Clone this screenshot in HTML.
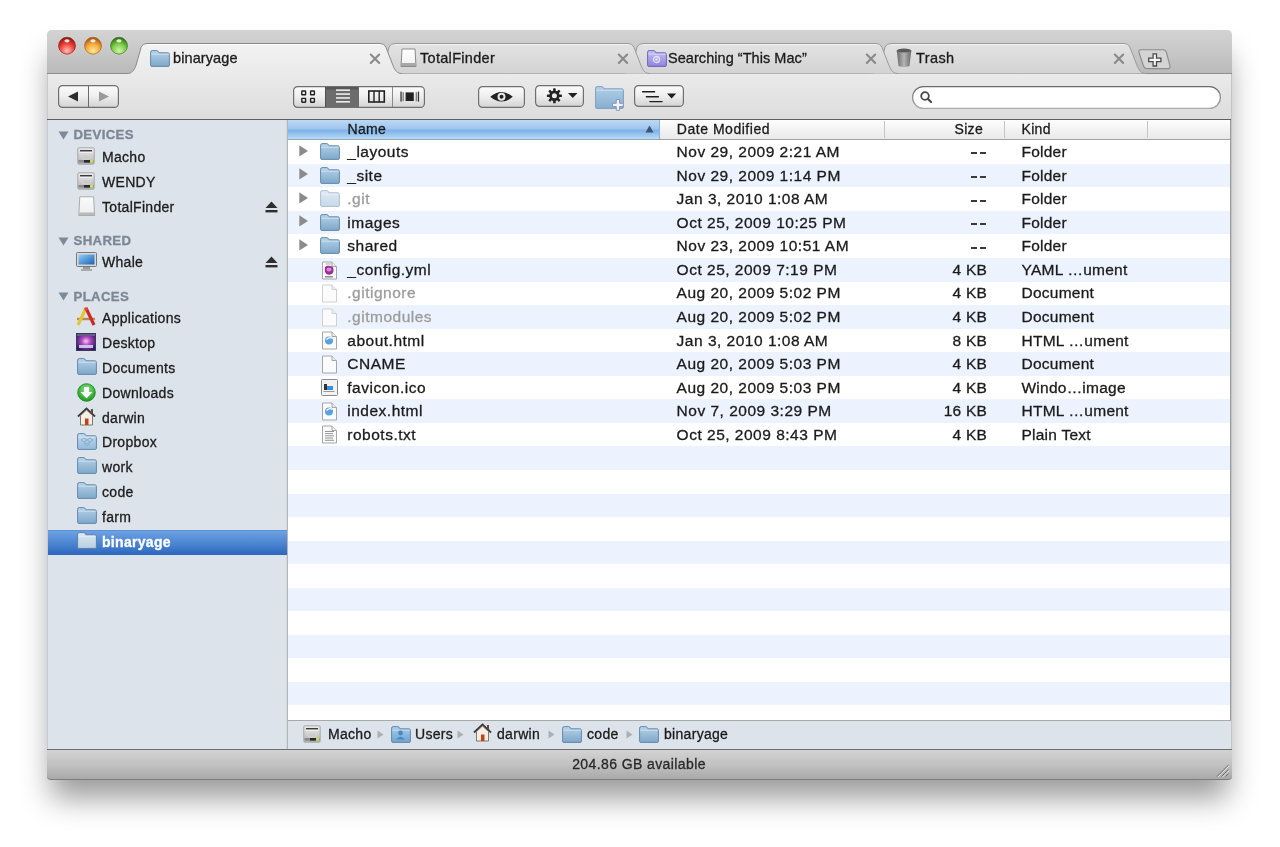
<!DOCTYPE html><html><head><meta charset='utf-8'><style>
*{box-sizing:border-box;margin:0;padding:0}
html,body{width:1280px;height:847px;overflow:hidden;background:#fff;font-family:"Liberation Sans", sans-serif;}
.a{position:absolute}
.t{position:absolute;white-space:nowrap;line-height:1;color:#1b1b1b;-webkit-text-stroke:0.3px currentColor}
svg{position:absolute;overflow:visible}
</style></head><body><div id='root' style='position:absolute;left:0;top:0;width:1280px;height:847px;will-change:transform'><div class='a' style='left:47px;top:30px;width:1185px;height:750px;border-radius:5px 5px 4px 4px;box-shadow:0 22px 30px -4px rgba(0,0,0,.4);background:#dcdcdc'></div><div class='a' style='left:47px;top:30px;width:1185px;height:44px;border-radius:5px 5px 0 0;background:linear-gradient(#d3d3d3,#c9c9c9 45%,#b9b9b9)'></div><div class='a' style='left:47px;top:74px;width:1185px;height:45px;background:linear-gradient(#eaeaea,#e2e2e2 60%,#dddddd)'></div><div class='a' style='left:47px;top:119px;width:1185px;height:1px;background:#5e5e5e'></div><svg style='left:0;top:0' width='1280' height='100' viewBox='0 0 1280 100'><defs><linearGradient id='gi' x1='0' y1='0' x2='0' y2='1'><stop offset='0' stop-color='#e3e3e3'/><stop offset='1' stop-color='#d3d3d3'/></linearGradient><linearGradient id='ga' x1='0' y1='0' x2='0' y2='1'><stop offset='0' stop-color='#f2f2f2'/><stop offset='1' stop-color='#eaeaea'/></linearGradient></defs><line x1='47' y1='73.5' x2='1232' y2='73.5' stroke='#8e8e8e' stroke-width='1'/><path d='M871,73.5 C876,73.5 878,70.5 880,65.5 L885,47.5 C886.5,44.5 888,43.5 892,43.5 L1123,43.5 C1127,43.5 1128.5,44.5 1130,47.5 L1137,65.5 C1139,70.5 1141,73.5 1146,73.5' fill='url(#gi)' stroke='#9b9b9b' stroke-width='1'/><line x1='891' y1='44.6' x2='1124' y2='44.6' stroke='#f2f2f2' stroke-width='1'/><path d='M623,73.5 C628,73.5 630,70.5 632,65.5 L637,47.5 C638.5,44.5 640,43.5 644,43.5 L875,43.5 C879,43.5 880.5,44.5 882,47.5 L889,65.5 C891,70.5 893,73.5 898,73.5' fill='url(#gi)' stroke='#9b9b9b' stroke-width='1'/><line x1='643' y1='44.6' x2='876' y2='44.6' stroke='#f2f2f2' stroke-width='1'/><path d='M375,73.5 C380,73.5 382,70.5 384,65.5 L389,47.5 C390.5,44.5 392,43.5 396,43.5 L627,43.5 C631,43.5 632.5,44.5 634,47.5 L641,65.5 C643,70.5 645,73.5 650,73.5' fill='url(#gi)' stroke='#9b9b9b' stroke-width='1'/><line x1='395' y1='44.6' x2='628' y2='44.6' stroke='#f2f2f2' stroke-width='1'/><path d='M1140.5,49.8 L1163,49.8 Q1165.5,49.8 1166.5,52.5 L1170,66 Q1170.5,68.6 1168,68.6 L1147,68.6 Q1144.5,68.6 1143.5,66 L1139,52.5 Q1138.5,49.8 1140.5,49.8 Z' fill='#d4d4d4' stroke='#8c8c8c' stroke-width='1.1'/><path d='M1153.1,53.8 h3.4 v4.4 h4.4 v3.4 h-4.4 v4.4 h-3.4 v-4.4 h-4.4 v-3.4 h4.4 Z' fill='#f6f6f6' stroke='#4a4a4a' stroke-width='1.3'/><path d='M127,73.5 C132,73.5 134,70.5 136,65.5 L141,47.5 C142.5,44.5 144,43.5 148,43.5 L379,43.5 C383,43.5 384.5,44.5 386,47.5 L393,65.5 C395,70.5 397,73.5 402,73.5 L402,74.5 L127,74.5 Z' fill='url(#ga)' stroke='none'/><path d='M127,73.5 C132,73.5 134,70.5 136,65.5 L141,47.5 C142.5,44.5 144,43.5 148,43.5 L379,43.5 C383,43.5 384.5,44.5 386,47.5 L393,65.5 C395,70.5 397,73.5 402,73.5' fill='none' stroke='#8a8a8a' stroke-width='1'/><line x1='147' y1='44.6' x2='380' y2='44.6' stroke='#fff' stroke-width='1'/><path d='M370.8,54.599999999999994 L379.2,63.0 M379.2,54.599999999999994 L370.8,63.0' stroke='#8a8a8a' stroke-width='2.1' stroke-linecap='round'/><path d='M618.8,54.599999999999994 L627.2,63.0 M627.2,54.599999999999994 L618.8,63.0' stroke='#8a8a8a' stroke-width='2.1' stroke-linecap='round'/><path d='M866.8,54.599999999999994 L875.2,63.0 M875.2,54.599999999999994 L866.8,63.0' stroke='#8a8a8a' stroke-width='2.1' stroke-linecap='round'/><path d='M1114.8,54.599999999999994 L1123.2,63.0 M1123.2,54.599999999999994 L1114.8,63.0' stroke='#8a8a8a' stroke-width='2.1' stroke-linecap='round'/></svg><svg style='left:0;top:0' width='200' height='80' viewBox='0 0 200 80'><defs><radialGradient id='l67' cx='0.5' cy='0.8' r='0.75'><stop offset='0' stop-color='#ffc0bc'/><stop offset='0.55' stop-color='#f2413a'/><stop offset='1' stop-color='#8e1c12'/></radialGradient></defs><circle cx='67' cy='45.7' r='9.6' fill='rgba(255,255,255,.18)'/><circle cx='67' cy='45.7' r='8.5' fill='url(#l67)' stroke='#8e1c12' stroke-opacity='.75' stroke-width='0.9'/><ellipse cx='67' cy='40.800000000000004' rx='2.6' ry='1.6' fill='rgba(255,255,255,.85)'/><defs><radialGradient id='l93' cx='0.5' cy='0.8' r='0.75'><stop offset='0' stop-color='#ffec98'/><stop offset='0.55' stop-color='#f5a93a'/><stop offset='1' stop-color='#a45a12'/></radialGradient></defs><circle cx='93' cy='45.7' r='9.6' fill='rgba(255,255,255,.18)'/><circle cx='93' cy='45.7' r='8.5' fill='url(#l93)' stroke='#a45a12' stroke-opacity='.75' stroke-width='0.9'/><ellipse cx='93' cy='40.800000000000004' rx='2.6' ry='1.6' fill='rgba(255,255,255,.85)'/><defs><radialGradient id='l119' cx='0.5' cy='0.8' r='0.75'><stop offset='0' stop-color='#d2f4a8'/><stop offset='0.55' stop-color='#7ccb48'/><stop offset='1' stop-color='#2f7418'/></radialGradient></defs><circle cx='119' cy='45.7' r='9.6' fill='rgba(255,255,255,.18)'/><circle cx='119' cy='45.7' r='8.5' fill='url(#l119)' stroke='#2f7418' stroke-opacity='.75' stroke-width='0.9'/><ellipse cx='119' cy='40.800000000000004' rx='2.6' ry='1.6' fill='rgba(255,255,255,.85)'/></svg><svg style='left:150px;top:49.5px' width='20' height='17' viewBox='0 0 20 17'><defs><linearGradient id='f1500_495' x1='0' y1='0' x2='0' y2='1'><stop offset='0' stop-color='#b6d3e9'/><stop offset='1' stop-color='#7ea7c9'/></linearGradient></defs><path d='M0.6,15.4 L0.6,2.2 Q0.6,0.6 2.2,0.6 L6.8,0.6 Q8,0.6 8.6,2.2 L8.9,2.8 L17.8,2.8 Q19.4,2.8 19.4,4.4 L19.4,15.4 Q19.4,16.4 18,16.4 L2,16.4 Q0.6,16.4 0.6,15.4 Z' fill='url(#f1500_495)' stroke='#6489ac' stroke-width='1'/><path d='M1.2,4.2 L18.8,4.2' stroke='rgba(255,255,255,.45)' stroke-width='1'/></svg><div class='t' style='left:173px;top:50.93px;font-size:14.5px;color:#1b1b1b;font-weight:400;letter-spacing:0.1px;'>binaryage</div><svg style='left:399.5px;top:48px' width='17' height='20' viewBox='0 0 17 20'><defs><linearGradient id='td' x1='0' y1='0' x2='0' y2='1'><stop offset='0' stop-color='#fff'/><stop offset='.8' stop-color='#f3f3f3'/><stop offset='1' stop-color='#b0b0b0'/></linearGradient></defs><path d='M2,1 L15,1 L16,18.5 L1,18.5 Z' fill='url(#td)' stroke='#8a8a8a' stroke-width='1'/><rect x='1.5' y='15' width='14' height='3' fill='#a8a8a8'/></svg><div class='t' style='left:420px;top:50.93px;font-size:14.5px;color:#1b1b1b;font-weight:400;letter-spacing:0.3px;'>TotalFinder</div><svg style='left:646.5px;top:49.5px' width='20' height='17' viewBox='0 0 20 17'><defs><linearGradient id='f6465_495' x1='0' y1='0' x2='0' y2='1'><stop offset='0' stop-color='#c8c0f4'/><stop offset='1' stop-color='#8f83dc'/></linearGradient></defs><path d='M0.6,15.4 L0.6,2.2 Q0.6,0.6 2.2,0.6 L6.8,0.6 Q8,0.6 8.6,2.2 L8.9,2.8 L17.8,2.8 Q19.4,2.8 19.4,4.4 L19.4,15.4 Q19.4,16.4 18,16.4 L2,16.4 Q0.6,16.4 0.6,15.4 Z' fill='url(#f6465_495)' stroke='#6e64bb' stroke-width='1'/><path d='M1.2,4.2 L18.8,4.2' stroke='rgba(255,255,255,.45)' stroke-width='1'/></svg><svg style='left:651px;top:54px' width='11' height='11' viewBox='0 0 11 11'><circle cx='5.5' cy='5.5' r='3' fill='none' stroke='#e6e2ff' stroke-width='1.3'/><circle cx='5.5' cy='5.5' r='1.2' fill='#e6e2ff'/></svg><div class='t' style='left:668px;top:50.93px;font-size:14.5px;color:#1b1b1b;font-weight:400;letter-spacing:0.05px;'>Searching “This Mac”</div><svg style='left:896px;top:48px' width='16' height='20' viewBox='0 0 16 20'><defs><linearGradient id='tr' x1='0' y1='0' x2='1' y2='0'><stop offset='0' stop-color='#6a6a6a'/><stop offset='.5' stop-color='#b5b5b5'/><stop offset='1' stop-color='#6a6a6a'/></linearGradient></defs><ellipse cx='8' cy='3' rx='7.5' ry='2.5' fill='#5a5a5a'/><path d='M0.8,3 L2.5,18 Q8,20 13.5,18 L15.2,3 Q8,6 0.8,3 Z' fill='url(#tr)'/></svg><div class='t' style='left:916px;top:50.93px;font-size:14.5px;color:#1b1b1b;font-weight:400;letter-spacing:0.4px;'>Trash</div><svg style='left:58px;top:85px' width='61' height='24' viewBox='0 0 61 24'><defs><linearGradient id='bt58' x1='0' y1='0' x2='0' y2='1'><stop offset='0' stop-color='#fbfbfb'/><stop offset='.45' stop-color='#f0f0f0'/><stop offset='1' stop-color='#d3d3d3'/></linearGradient></defs><rect x='0.6' y='0.6' width='59.8' height='21.8' rx='4' fill='url(#bt58)' stroke='#707070' stroke-width='1.2'/><line x1='30.5' y1='1' x2='30.5' y2='22' stroke='#6a6a6a'/><path d='M10,11.5 L20,6.5 L20,16.5 Z' fill='#2c2c2c'/><path d='M51,11.5 L41,6.5 L41,16.5 Z' fill='#9a9a9a'/></svg><svg style='left:293px;top:85.6px' width='132' height='23' viewBox='0 0 132 23'><defs><linearGradient id='bt293' x1='0' y1='0' x2='0' y2='1'><stop offset='0' stop-color='#fbfbfb'/><stop offset='.45' stop-color='#f0f0f0'/><stop offset='1' stop-color='#d3d3d3'/></linearGradient></defs><rect x='0.6' y='0.6' width='130.8' height='20.8' rx='4' fill='url(#bt293)' stroke='#707070' stroke-width='1.2'/><rect x='32' y='1' width='33.5' height='20' fill='#6c6c6c'/><rect x='32' y='1' width='33.5' height='2.5' fill='#575757'/><line x1='32.5' y1='1' x2='32.5' y2='21' stroke='#505050'/><line x1='65.5' y1='1' x2='65.5' y2='21' stroke='#6a6a6a'/><line x1='99.5' y1='1' x2='99.5' y2='21' stroke='#8a8a8a'/><rect x='8.8' y='5' width='3.8' height='3.8' rx='0.4' fill='none' stroke='#222' stroke-width='1.4'/><rect x='8.8' y='12.4' width='3.8' height='3.8' rx='0.4' fill='none' stroke='#222' stroke-width='1.4'/><rect x='17.6' y='5' width='3.8' height='3.8' rx='0.4' fill='none' stroke='#222' stroke-width='1.4'/><rect x='17.6' y='12.4' width='3.8' height='3.8' rx='0.4' fill='none' stroke='#222' stroke-width='1.4'/><rect x='43' y='3.4' width='14' height='1.5' fill='#f4f4f4'/><rect x='43' y='7.3' width='14' height='1.5' fill='#f4f4f4'/><rect x='43' y='11.2' width='14' height='1.5' fill='#f4f4f4'/><rect x='43' y='15.1' width='14' height='1.5' fill='#f4f4f4'/><rect x='75.8' y='5' width='15.5' height='11' fill='none' stroke='#222' stroke-width='1.6'/><line x1='81' y1='5' x2='81' y2='16' stroke='#222' stroke-width='1.4'/><line x1='86.2' y1='5' x2='86.2' y2='16' stroke='#222' stroke-width='1.4'/><rect x='112.6' y='6.4' width='8.2' height='8.6' fill='#222'/><rect x='107.4' y='5.6' width='1.3' height='10' fill='#333'/><rect x='109.6' y='6.2' width='1.1' height='9' fill='#666'/><rect x='124.8' y='5.6' width='1.3' height='10' fill='#333'/><rect x='122.7' y='6.2' width='1.1' height='9' fill='#666'/></svg><svg style='left:478px;top:85.5px' width='47' height='23' viewBox='0 0 47 23'><defs><linearGradient id='bt478' x1='0' y1='0' x2='0' y2='1'><stop offset='0' stop-color='#fbfbfb'/><stop offset='.45' stop-color='#f0f0f0'/><stop offset='1' stop-color='#d3d3d3'/></linearGradient></defs><rect x='0.6' y='0.6' width='45.8' height='20.8' rx='4' fill='url(#bt478)' stroke='#707070' stroke-width='1.2'/><path d='M12.2,10.8 Q23.5,1.2 34.8,10.8 Q23.5,20.4 12.2,10.8 Z' fill='#222'/><circle cx='23.5' cy='10.8' r='4' fill='#e8e8e8'/><circle cx='23.5' cy='10.8' r='2' fill='#222'/></svg><svg style='left:535px;top:85.4px' width='49' height='23' viewBox='0 0 49 23'><defs><linearGradient id='bt535' x1='0' y1='0' x2='0' y2='1'><stop offset='0' stop-color='#fbfbfb'/><stop offset='.45' stop-color='#f0f0f0'/><stop offset='1' stop-color='#d3d3d3'/></linearGradient></defs><rect x='0.6' y='0.6' width='47.8' height='20.8' rx='4' fill='url(#bt535)' stroke='#707070' stroke-width='1.2'/><g transform='translate(19.4,10.8)'><rect x='-1.3' y='-7.5' width='2.6' height='15' rx='0.6' fill='#222' transform='rotate(0)'/><rect x='-1.3' y='-7.5' width='2.6' height='15' rx='0.6' fill='#222' transform='rotate(45)'/><rect x='-1.3' y='-7.5' width='2.6' height='15' rx='0.6' fill='#222' transform='rotate(90)'/><rect x='-1.3' y='-7.5' width='2.6' height='15' rx='0.6' fill='#222' transform='rotate(135)'/><circle r='5.2' fill='#222'/><circle r='2.5' fill='#eaeaea'/></g><path d='M33,8 L42.5,8 L37.75,13 Z' fill='#222'/></svg><svg style='left:594.5px;top:86px' width='29' height='23' viewBox='0 0 29 23'><defs><linearGradient id='f5945_860' x1='0' y1='0' x2='0' y2='1'><stop offset='0' stop-color='#b2cfe6'/><stop offset='1' stop-color='#86afd0'/></linearGradient></defs><path d='M0.6,21.4 L0.6,2.2 Q0.6,0.6 2.2,0.6 L6.8,0.6 Q8,0.6 8.6,2.2 L8.9,2.8 L26.8,2.8 Q28.4,2.8 28.4,4.4 L28.4,21.4 Q28.4,22.4 27,22.4 L2,22.4 Q0.6,22.4 0.6,21.4 Z' fill='url(#f5945_860)' stroke='#7c9fbe' stroke-width='1'/><path d='M1.2,4.2 L27.8,4.2' stroke='rgba(255,255,255,.45)' stroke-width='1'/></svg><svg style='left:612px;top:98.5px' width='12' height='12' viewBox='0 0 12 12'><path d='M4.3,0.5 h3.2 v3.8 h3.8 v3.2 h-3.8 v3.8 h-3.2 v-3.8 h-3.8 v-3.2 h3.8 Z' fill='#f4f4ff' stroke='#7f8fc0' stroke-width='0.9'/></svg><svg style='left:634px;top:85.4px' width='50' height='23' viewBox='0 0 50 23'><defs><linearGradient id='bt634' x1='0' y1='0' x2='0' y2='1'><stop offset='0' stop-color='#fbfbfb'/><stop offset='.45' stop-color='#f0f0f0'/><stop offset='1' stop-color='#d3d3d3'/></linearGradient></defs><rect x='0.6' y='0.6' width='48.8' height='20.8' rx='4' fill='url(#bt634)' stroke='#707070' stroke-width='1.2'/><path d='M8.6,6.8 H20.6 M12.4,11.7 H24.4 M15.9,16.6 H28.1' stroke='#1e1e1e' stroke-width='1.4' stroke-linecap='round'/><path d='M33,8.6 L42.2,8.6 L37.6,13.4 Z' fill='#1e1e1e'/></svg><svg style='left:912px;top:86px' width='309' height='23' viewBox='0 0 309 23'><defs><linearGradient id='sf' x1='0' y1='0' x2='0' y2='1'><stop offset='0' stop-color='#6a6a6a'/><stop offset='1' stop-color='#ababab'/></linearGradient></defs><rect x='0.6' y='0.6' width='307.8' height='21.8' rx='10.9' fill='#fff' stroke='url(#sf)' stroke-width='1.2'/><circle cx='13' cy='10' r='3.8' fill='none' stroke='#4a4a4a' stroke-width='1.8'/><line x1='15.8' y1='12.8' x2='19' y2='16' stroke='#4a4a4a' stroke-width='2.2' stroke-linecap='round'/></svg><div class='a' style='left:47px;top:120px;width:241px;height:629px;background:#dde3ea'></div><div class='a' style='left:286px;top:120px;width:1px;height:629px;background:#d3d9e0'></div><div class='a' style='left:287px;top:120px;width:1px;height:629px;background:#b4b6b9'></div><svg style='left:58px;top:130.5px' width='11' height='9' viewBox='0 0 11 9'><path d='M0.5,0.5 L10.5,0.5 L5.5,8.5 Z' fill='#7e8a98'/></svg><div class='t' style='left:73.5px;top:128.33px;font-size:13.2px;color:#7c8795;font-weight:700;letter-spacing:0.35px;'>DEVICES</div><svg style='left:77px;top:147.4px' width='18' height='18' viewBox='0 0 18 18'><defs><linearGradient id='hd7847' x1='0' y1='0' x2='0' y2='1'><stop offset='0' stop-color='#ececec'/><stop offset='.6' stop-color='#c9c9c9'/><stop offset='1' stop-color='#b4b4b4'/></linearGradient></defs><rect x='0.8' y='0.8' width='16.4' height='16.4' rx='1.2' fill='url(#hd7847)' stroke='#a2a2a2' stroke-width='0.9'/><rect x='3' y='3' width='12' height='1.4' fill='#3c3c3c'/><rect x='2.5' y='5' width='13' height='0.8' fill='#f6f6f6'/><ellipse cx='9.0' cy='9.5' rx='4.5' ry='2.6' fill='none' stroke='#dadada' stroke-width='0.8'/><rect x='1.5' y='13' width='15' height='2.6' fill='#8a8a8a'/><rect x='7' y='13' width='6' height='2.6' fill='#2a2a2a'/><rect x='13' y='12.8' width='3' height='2.8' fill='#c8e04a'/></svg><div class='t' style='left:102px;top:150.05px;font-size:14px;color:#1c1c1c;font-weight:400;letter-spacing:0.3px;'>Macho</div><svg style='left:77px;top:172.2px' width='18' height='18' viewBox='0 0 18 18'><defs><linearGradient id='hd7872' x1='0' y1='0' x2='0' y2='1'><stop offset='0' stop-color='#ececec'/><stop offset='.6' stop-color='#c9c9c9'/><stop offset='1' stop-color='#b4b4b4'/></linearGradient></defs><rect x='0.8' y='0.8' width='16.4' height='16.4' rx='1.2' fill='url(#hd7872)' stroke='#a2a2a2' stroke-width='0.9'/><rect x='3' y='3' width='12' height='1.4' fill='#3c3c3c'/><rect x='2.5' y='5' width='13' height='0.8' fill='#f6f6f6'/><ellipse cx='9.0' cy='9.5' rx='4.5' ry='2.6' fill='none' stroke='#dadada' stroke-width='0.8'/><rect x='1.5' y='13' width='15' height='2.6' fill='#8a8a8a'/><rect x='7' y='13' width='6' height='2.6' fill='#2a2a2a'/><rect x='13' y='12.8' width='3' height='2.8' fill='#c8e04a'/></svg><div class='t' style='left:102px;top:174.85px;font-size:14px;color:#1c1c1c;font-weight:400;letter-spacing:0.3px;'>WENDY</div><svg style='left:78px;top:196.0px' width='18' height='21' viewBox='0 0 18 21'><defs><linearGradient id='wd' x1='0' y1='0' x2='0' y2='1'><stop offset='0' stop-color='#fafafa'/><stop offset='.8' stop-color='#f0f0f0'/><stop offset='1' stop-color='#d8d8d8'/></linearGradient></defs><path d='M1.8,0.8 L15.6,0.8 L16.6,19.5 L0.8,19.5 Z' fill='url(#wd)' stroke='#a5a5a5' stroke-width='0.9'/><rect x='1.2' y='16.5' width='15' height='2.6' fill='#b9b9b9'/></svg><div class='t' style='left:102px;top:199.65px;font-size:14px;color:#1c1c1c;font-weight:400;letter-spacing:0.3px;'>TotalFinder</div><svg style='left:265px;top:200.5px' width='14' height='12' viewBox='0 0 14 12'><path d='M0.5,7 L6.5,0.5 L12.5,7 Z' fill='#2e2e2e'/><rect x='0.5' y='9' width='12' height='2.4' fill='#2e2e2e'/></svg><svg style='left:58px;top:236.6px' width='11' height='9' viewBox='0 0 11 9'><path d='M0.5,0.5 L10.5,0.5 L5.5,8.5 Z' fill='#7e8a98'/></svg><div class='t' style='left:73.5px;top:234.43px;font-size:13.2px;color:#7c8795;font-weight:700;letter-spacing:0.35px;'>SHARED</div><svg style='left:76px;top:252.2px' width='21' height='20' viewBox='0 0 21 20'><defs><linearGradient id='mon' x1='0' y1='0' x2='1' y2='1'><stop offset='0' stop-color='#8fd0f8'/><stop offset='1' stop-color='#1d5fb7'/></linearGradient></defs><rect x='0.5' y='0.5' width='20' height='14' rx='1' fill='#d9d9d9' stroke='#777'/><rect x='2.5' y='2.5' width='16' height='10' fill='url(#mon)'/><rect x='7' y='15' width='7' height='2' fill='#9a9a9a'/><rect x='5' y='17' width='11' height='2' fill='#aaa'/></svg><div class='t' style='left:102px;top:255.35px;font-size:14px;color:#1c1c1c;font-weight:400;letter-spacing:0.3px;'>Whale</div><svg style='left:265px;top:256.2px' width='14' height='12' viewBox='0 0 14 12'><path d='M0.5,7 L6.5,0.5 L12.5,7 Z' fill='#2e2e2e'/><rect x='0.5' y='9' width='12' height='2.4' fill='#2e2e2e'/></svg><svg style='left:58px;top:292px' width='11' height='9' viewBox='0 0 11 9'><path d='M0.5,0.5 L10.5,0.5 L5.5,8.5 Z' fill='#7e8a98'/></svg><div class='t' style='left:73.5px;top:289.83px;font-size:13.2px;color:#7c8795;font-weight:700;letter-spacing:0.35px;'>PLACES</div><svg style='left:76px;top:306.3px' width='20' height='21' viewBox='0 0 20 21'><path d='M1,13 L19,13' stroke='#b88a52' stroke-width='2.4'/><path d='M2,19 L10,2' stroke='#e2c63a' stroke-width='3.2'/><path d='M10,2 L18,19' stroke='#c92a2a' stroke-width='3.2'/><circle cx='10' cy='3' r='1.8' fill='#e04a3a'/></svg><div class='t' style='left:102px;top:311.45px;font-size:14px;color:#1c1c1c;font-weight:400;letter-spacing:0.3px;'>Applications</div><svg style='left:76px;top:333.1px' width='20' height='18' viewBox='0 0 20 18'><defs><radialGradient id='dk' cx='.5' cy='.45' r='.6'><stop offset='0' stop-color='#f7c8f0'/><stop offset='.4' stop-color='#b04ac0'/><stop offset='1' stop-color='#2a1660'/></radialGradient></defs><rect x='0.5' y='0.5' width='19' height='17' fill='url(#dk)' stroke='#3a3a5a'/><rect x='1' y='1' width='18' height='2' fill='#6a5a8a'/><rect x='3' y='12' width='14' height='3' fill='#dfe4ff' opacity='.8'/></svg><div class='t' style='left:102px;top:336.25px;font-size:14px;color:#1c1c1c;font-weight:400;letter-spacing:0.3px;'>Desktop</div><svg style='left:77px;top:358.0px' width='20' height='17' viewBox='0 0 20 17'><defs><linearGradient id='f770_3580' x1='0' y1='0' x2='0' y2='1'><stop offset='0' stop-color='#b6d3e9'/><stop offset='1' stop-color='#7ea7c9'/></linearGradient></defs><path d='M0.6,15.4 L0.6,2.2 Q0.6,0.6 2.2,0.6 L6.8,0.6 Q8,0.6 8.6,2.2 L8.9,2.8 L17.8,2.8 Q19.4,2.8 19.4,4.4 L19.4,15.4 Q19.4,16.4 18,16.4 L2,16.4 Q0.6,16.4 0.6,15.4 Z' fill='url(#f770_3580)' stroke='#6489ac' stroke-width='1'/><path d='M1.2,4.2 L18.8,4.2' stroke='rgba(255,255,255,.45)' stroke-width='1'/></svg><div class='t' style='left:102px;top:360.95px;font-size:14px;color:#1c1c1c;font-weight:400;letter-spacing:0.3px;'>Documents</div><svg style='left:77px;top:382.6px' width='19' height='19' viewBox='0 0 19 19'><defs><radialGradient id='dl' cx='.5' cy='.35' r='.65'><stop offset='0' stop-color='#8fe88a'/><stop offset='1' stop-color='#169a1c'/></radialGradient></defs><circle cx='9.5' cy='9.5' r='8.8' fill='url(#dl)' stroke='#17801a' stroke-width='.8'/><path d='M7,4 h5 v5 h3.5 L9.5,15.5 L3.5,9 H7 Z' fill='#fff'/></svg><div class='t' style='left:102px;top:385.75px;font-size:14px;color:#1c1c1c;font-weight:400;letter-spacing:0.3px;'>Downloads</div><svg style='left:77px;top:406.5px' width='19' height='19' viewBox='0 0 19 19'><path d='M1,9.5 L9.5,1.5 L18,9.5' fill='none' stroke='#3a3a3a' stroke-width='1.8'/><path d='M3.5,8.5 L9.5,3 L15.5,8.5 L15.5,18 L3.5,18 Z' fill='#f4efe6' stroke='#6a5a4a' stroke-width='.8'/><rect x='8' y='11.5' width='3.5' height='6.5' fill='#c8401a'/><rect x='14' y='2' width='2' height='4' fill='#6a4a3a'/></svg><div class='t' style='left:102px;top:410.65px;font-size:14px;color:#1c1c1c;font-weight:400;letter-spacing:0.3px;'>darwin</div><svg style='left:77px;top:432.5px' width='20' height='17' viewBox='0 0 20 17'><defs><linearGradient id='f770_4325' x1='0' y1='0' x2='0' y2='1'><stop offset='0' stop-color='#c4dcef'/><stop offset='1' stop-color='#93b9dc'/></linearGradient></defs><path d='M0.6,15.4 L0.6,2.2 Q0.6,0.6 2.2,0.6 L6.8,0.6 Q8,0.6 8.6,2.2 L8.9,2.8 L17.8,2.8 Q19.4,2.8 19.4,4.4 L19.4,15.4 Q19.4,16.4 18,16.4 L2,16.4 Q0.6,16.4 0.6,15.4 Z' fill='url(#f770_4325)' stroke='#6489ac' stroke-width='1'/><path d='M1.2,4.2 L18.8,4.2' stroke='rgba(255,255,255,.45)' stroke-width='1'/></svg><svg style='left:81px;top:437.3px' width='12' height='10' viewBox='0 0 12 10'><path d='M3,1 L6,3 L3,5 L0,3 Z M9,1 L12,3 L9,5 L6,3 Z M3,5 L6,7 L9,5 M3,6 L6,9 L9,6' fill='none' stroke='#8fb0cc' stroke-width='1'/></svg><div class='t' style='left:102px;top:435.45px;font-size:14px;color:#1c1c1c;font-weight:400;letter-spacing:0.3px;'>Dropbox</div><svg style='left:77px;top:457.3px' width='20' height='17' viewBox='0 0 20 17'><defs><linearGradient id='f770_4573' x1='0' y1='0' x2='0' y2='1'><stop offset='0' stop-color='#b6d3e9'/><stop offset='1' stop-color='#7ea7c9'/></linearGradient></defs><path d='M0.6,15.4 L0.6,2.2 Q0.6,0.6 2.2,0.6 L6.8,0.6 Q8,0.6 8.6,2.2 L8.9,2.8 L17.8,2.8 Q19.4,2.8 19.4,4.4 L19.4,15.4 Q19.4,16.4 18,16.4 L2,16.4 Q0.6,16.4 0.6,15.4 Z' fill='url(#f770_4573)' stroke='#6489ac' stroke-width='1'/><path d='M1.2,4.2 L18.8,4.2' stroke='rgba(255,255,255,.45)' stroke-width='1'/></svg><div class='t' style='left:102px;top:460.25px;font-size:14px;color:#1c1c1c;font-weight:400;letter-spacing:0.3px;'>work</div><svg style='left:77px;top:482.09999999999997px' width='20' height='17' viewBox='0 0 20 17'><defs><linearGradient id='f770_4821' x1='0' y1='0' x2='0' y2='1'><stop offset='0' stop-color='#b6d3e9'/><stop offset='1' stop-color='#7ea7c9'/></linearGradient></defs><path d='M0.6,15.4 L0.6,2.2 Q0.6,0.6 2.2,0.6 L6.8,0.6 Q8,0.6 8.6,2.2 L8.9,2.8 L17.8,2.8 Q19.4,2.8 19.4,4.4 L19.4,15.4 Q19.4,16.4 18,16.4 L2,16.4 Q0.6,16.4 0.6,15.4 Z' fill='url(#f770_4821)' stroke='#6489ac' stroke-width='1'/><path d='M1.2,4.2 L18.8,4.2' stroke='rgba(255,255,255,.45)' stroke-width='1'/></svg><div class='t' style='left:102px;top:485.05px;font-size:14px;color:#1c1c1c;font-weight:400;letter-spacing:0.3px;'>code</div><svg style='left:77px;top:506.90000000000003px' width='20' height='17' viewBox='0 0 20 17'><defs><linearGradient id='f770_5069' x1='0' y1='0' x2='0' y2='1'><stop offset='0' stop-color='#b6d3e9'/><stop offset='1' stop-color='#7ea7c9'/></linearGradient></defs><path d='M0.6,15.4 L0.6,2.2 Q0.6,0.6 2.2,0.6 L6.8,0.6 Q8,0.6 8.6,2.2 L8.9,2.8 L17.8,2.8 Q19.4,2.8 19.4,4.4 L19.4,15.4 Q19.4,16.4 18,16.4 L2,16.4 Q0.6,16.4 0.6,15.4 Z' fill='url(#f770_5069)' stroke='#6489ac' stroke-width='1'/><path d='M1.2,4.2 L18.8,4.2' stroke='rgba(255,255,255,.45)' stroke-width='1'/></svg><div class='t' style='left:102px;top:509.85px;font-size:14px;color:#1c1c1c;font-weight:400;letter-spacing:0.3px;'>farm</div><div class='a' style='left:48px;top:529.5px;width:239px;height:25px;background:linear-gradient(#6da2e2,#4d86d1 50%,#2c66bf);border-top:1px solid #5c90d8'></div><svg style='left:77px;top:531.7px' width='20' height='17' viewBox='0 0 20 17'><defs><linearGradient id='f770_5317' x1='0' y1='0' x2='0' y2='1'><stop offset='0' stop-color='#dfe9f2'/><stop offset='1' stop-color='#b9cfe2'/></linearGradient></defs><path d='M0.6,15.4 L0.6,2.2 Q0.6,0.6 2.2,0.6 L6.8,0.6 Q8,0.6 8.6,2.2 L8.9,2.8 L17.8,2.8 Q19.4,2.8 19.4,4.4 L19.4,15.4 Q19.4,16.4 18,16.4 L2,16.4 Q0.6,16.4 0.6,15.4 Z' fill='url(#f770_5317)' stroke='#5a7fae' stroke-width='1'/><path d='M1.2,4.2 L18.8,4.2' stroke='rgba(255,255,255,.45)' stroke-width='1'/></svg><div class='t' style='left:102px;top:534.65px;font-size:14px;color:#fff;font-weight:700;letter-spacing:0.3px;'>binaryage</div><div class='a' style='left:288px;top:120px;width:943px;height:20px;background:linear-gradient(#fefefe,#f3f3f3 50%,#e9e9e9);border-bottom:1px solid #a3a3a3'></div><div class='a' style='left:288px;top:120px;width:372px;height:19px;background:linear-gradient(#bcd9f5,#a0c6ee 45%,#7fb2e8 55%,#b4dbfa)'></div><div class='a' style='left:883.5px;top:121px;width:1px;height:17px;background:#c4c4c4'></div><div class='a' style='left:1003.5px;top:121px;width:1px;height:17px;background:#c4c4c4'></div><div class='a' style='left:1146.5px;top:121px;width:1px;height:17px;background:#c4c4c4'></div><div class='a' style='left:659px;top:120px;width:1px;height:19px;background:#8eaed6'></div><svg style='left:645px;top:125px' width='9' height='8' viewBox='0 0 9 8'><path d='M4.5,0.5 L8.5,7.5 L0.5,7.5 Z' fill='#3c5570'/></svg><div class='t' style='left:347.5px;top:121.85px;font-size:14px;color:#1a1a1a;font-weight:400;letter-spacing:0.3px;'>Name</div><div class='t' style='left:676.8px;top:121.85px;font-size:14px;color:#1a1a1a;font-weight:400;letter-spacing:0.53px;'>Date Modified</div><div class='t' style='right:297px;top:121.85px;font-size:14px;color:#1a1a1a;font-weight:400;letter-spacing:0.3px'>Size</div><div class='t' style='left:1021.5px;top:121.85px;font-size:14px;color:#1a1a1a;font-weight:400;letter-spacing:0.3px;'>Kind</div><div class='a' style='left:288px;top:140.3px;width:943px;height:579.7px;background:#fff'></div><div class='a' style='left:288px;top:163.85px;width:943px;height:23.55px;background:#edf3fe'></div><div class='a' style='left:288px;top:210.95px;width:943px;height:23.55px;background:#edf3fe'></div><div class='a' style='left:288px;top:258.05px;width:943px;height:23.55px;background:#edf3fe'></div><div class='a' style='left:288px;top:305.15px;width:943px;height:23.55px;background:#edf3fe'></div><div class='a' style='left:288px;top:352.25px;width:943px;height:23.55px;background:#edf3fe'></div><div class='a' style='left:288px;top:399.35px;width:943px;height:23.55px;background:#edf3fe'></div><div class='a' style='left:288px;top:446.45px;width:943px;height:23.55px;background:#edf3fe'></div><div class='a' style='left:288px;top:493.55px;width:943px;height:23.55px;background:#edf3fe'></div><div class='a' style='left:288px;top:540.65px;width:943px;height:23.55px;background:#edf3fe'></div><div class='a' style='left:288px;top:587.75px;width:943px;height:23.55px;background:#edf3fe'></div><div class='a' style='left:288px;top:634.85px;width:943px;height:23.55px;background:#edf3fe'></div><div class='a' style='left:288px;top:681.95px;width:943px;height:23.55px;background:#edf3fe'></div><svg style='left:299px;top:144.60000000000002px' width='10' height='12' viewBox='0 0 10 12'><path d='M0.3,0.3 L9,5.9 L0.3,11.5 Z' fill='#8b8b8b'/></svg><svg style='left:320px;top:143.10000000000002px' width='20' height='17' viewBox='0 0 20 17'><defs><linearGradient id='f3200_1431' x1='0' y1='0' x2='0' y2='1'><stop offset='0' stop-color='#b6d3e9'/><stop offset='1' stop-color='#7ea7c9'/></linearGradient></defs><path d='M0.6,15.4 L0.6,2.2 Q0.6,0.6 2.2,0.6 L6.8,0.6 Q8,0.6 8.6,2.2 L8.9,2.8 L17.8,2.8 Q19.4,2.8 19.4,4.4 L19.4,15.4 Q19.4,16.4 18,16.4 L2,16.4 Q0.6,16.4 0.6,15.4 Z' fill='url(#f3200_1431)' stroke='#6489ac' stroke-width='1'/><path d='M1.2,4.2 L18.8,4.2' stroke='rgba(255,255,255,.45)' stroke-width='1'/></svg><div class='t' style='left:347.3px;top:144.18px;font-size:15.5px;color:#1b1b1b;font-weight:400;letter-spacing:0.5px;'>_layouts</div><div class='t' style='left:676.6px;top:144.18px;font-size:15.5px;color:#1b1b1b;font-weight:400;letter-spacing:0.5px;'>Nov 29, 2009 2:21 AM</div><div class='a' style='left:971px;top:152px;width:6px;height:2px;background:#3a3a3a'></div><div class='a' style='left:980px;top:152px;width:6px;height:2px;background:#3a3a3a'></div><div class='t' style='left:1021.5px;top:144.18px;font-size:15.5px;color:#1b1b1b;font-weight:400;letter-spacing:0.24px;'>Folder</div><svg style='left:299px;top:168.15000000000003px' width='10' height='12' viewBox='0 0 10 12'><path d='M0.3,0.3 L9,5.9 L0.3,11.5 Z' fill='#8b8b8b'/></svg><svg style='left:320px;top:166.65000000000003px' width='20' height='17' viewBox='0 0 20 17'><defs><linearGradient id='f3200_1666' x1='0' y1='0' x2='0' y2='1'><stop offset='0' stop-color='#b6d3e9'/><stop offset='1' stop-color='#7ea7c9'/></linearGradient></defs><path d='M0.6,15.4 L0.6,2.2 Q0.6,0.6 2.2,0.6 L6.8,0.6 Q8,0.6 8.6,2.2 L8.9,2.8 L17.8,2.8 Q19.4,2.8 19.4,4.4 L19.4,15.4 Q19.4,16.4 18,16.4 L2,16.4 Q0.6,16.4 0.6,15.4 Z' fill='url(#f3200_1666)' stroke='#6489ac' stroke-width='1'/><path d='M1.2,4.2 L18.8,4.2' stroke='rgba(255,255,255,.45)' stroke-width='1'/></svg><div class='t' style='left:347.3px;top:167.73px;font-size:15.5px;color:#1b1b1b;font-weight:400;letter-spacing:0.5px;'>_site</div><div class='t' style='left:676.6px;top:167.73px;font-size:15.5px;color:#1b1b1b;font-weight:400;letter-spacing:0.5px;'>Nov 29, 2009 1:14 PM</div><div class='a' style='left:971px;top:176px;width:6px;height:2px;background:#3a3a3a'></div><div class='a' style='left:980px;top:176px;width:6px;height:2px;background:#3a3a3a'></div><div class='t' style='left:1021.5px;top:167.73px;font-size:15.5px;color:#1b1b1b;font-weight:400;letter-spacing:0.24px;'>Folder</div><svg style='left:299px;top:191.70000000000002px' width='10' height='12' viewBox='0 0 10 12'><path d='M0.3,0.3 L9,5.9 L0.3,11.5 Z' fill='#8b8b8b'/></svg><svg style='left:320px;top:190.20000000000002px' width='20' height='17' viewBox='0 0 20 17'><defs><linearGradient id='f3200_1902' x1='0' y1='0' x2='0' y2='1'><stop offset='0' stop-color='#dfeaf3'/><stop offset='1' stop-color='#c7d9e9'/></linearGradient></defs><path d='M0.6,15.4 L0.6,2.2 Q0.6,0.6 2.2,0.6 L6.8,0.6 Q8,0.6 8.6,2.2 L8.9,2.8 L17.8,2.8 Q19.4,2.8 19.4,4.4 L19.4,15.4 Q19.4,16.4 18,16.4 L2,16.4 Q0.6,16.4 0.6,15.4 Z' fill='url(#f3200_1902)' stroke='#a9bfd3' stroke-width='1'/><path d='M1.2,4.2 L18.8,4.2' stroke='rgba(255,255,255,.45)' stroke-width='1'/></svg><div class='t' style='left:347.3px;top:191.28px;font-size:15.5px;color:#9c9c9c;font-weight:400;letter-spacing:0.5px;'>.git</div><div class='t' style='left:676.6px;top:191.28px;font-size:15.5px;color:#1b1b1b;font-weight:400;letter-spacing:0.5px;'>Jan 3, 2010 1:08 AM</div><div class='a' style='left:971px;top:200px;width:6px;height:2px;background:#3a3a3a'></div><div class='a' style='left:980px;top:200px;width:6px;height:2px;background:#3a3a3a'></div><div class='t' style='left:1021.5px;top:191.28px;font-size:15.5px;color:#1b1b1b;font-weight:400;letter-spacing:0.24px;'>Folder</div><svg style='left:299px;top:215.25000000000003px' width='10' height='12' viewBox='0 0 10 12'><path d='M0.3,0.3 L9,5.9 L0.3,11.5 Z' fill='#8b8b8b'/></svg><svg style='left:320px;top:213.75000000000003px' width='20' height='17' viewBox='0 0 20 17'><defs><linearGradient id='f3200_2137' x1='0' y1='0' x2='0' y2='1'><stop offset='0' stop-color='#b6d3e9'/><stop offset='1' stop-color='#7ea7c9'/></linearGradient></defs><path d='M0.6,15.4 L0.6,2.2 Q0.6,0.6 2.2,0.6 L6.8,0.6 Q8,0.6 8.6,2.2 L8.9,2.8 L17.8,2.8 Q19.4,2.8 19.4,4.4 L19.4,15.4 Q19.4,16.4 18,16.4 L2,16.4 Q0.6,16.4 0.6,15.4 Z' fill='url(#f3200_2137)' stroke='#6489ac' stroke-width='1'/><path d='M1.2,4.2 L18.8,4.2' stroke='rgba(255,255,255,.45)' stroke-width='1'/></svg><div class='t' style='left:347.3px;top:214.83px;font-size:15.5px;color:#1b1b1b;font-weight:400;letter-spacing:0.5px;'>images</div><div class='t' style='left:676.6px;top:214.83px;font-size:15.5px;color:#1b1b1b;font-weight:400;letter-spacing:0.5px;'>Oct 25, 2009 10:25 PM</div><div class='a' style='left:971px;top:223px;width:6px;height:2px;background:#3a3a3a'></div><div class='a' style='left:980px;top:223px;width:6px;height:2px;background:#3a3a3a'></div><div class='t' style='left:1021.5px;top:214.83px;font-size:15.5px;color:#1b1b1b;font-weight:400;letter-spacing:0.24px;'>Folder</div><svg style='left:299px;top:238.8px' width='10' height='12' viewBox='0 0 10 12'><path d='M0.3,0.3 L9,5.9 L0.3,11.5 Z' fill='#8b8b8b'/></svg><svg style='left:320px;top:237.3px' width='20' height='17' viewBox='0 0 20 17'><defs><linearGradient id='f3200_2373' x1='0' y1='0' x2='0' y2='1'><stop offset='0' stop-color='#b6d3e9'/><stop offset='1' stop-color='#7ea7c9'/></linearGradient></defs><path d='M0.6,15.4 L0.6,2.2 Q0.6,0.6 2.2,0.6 L6.8,0.6 Q8,0.6 8.6,2.2 L8.9,2.8 L17.8,2.8 Q19.4,2.8 19.4,4.4 L19.4,15.4 Q19.4,16.4 18,16.4 L2,16.4 Q0.6,16.4 0.6,15.4 Z' fill='url(#f3200_2373)' stroke='#6489ac' stroke-width='1'/><path d='M1.2,4.2 L18.8,4.2' stroke='rgba(255,255,255,.45)' stroke-width='1'/></svg><div class='t' style='left:347.3px;top:238.38px;font-size:15.5px;color:#1b1b1b;font-weight:400;letter-spacing:0.5px;'>shared</div><div class='t' style='left:676.6px;top:238.38px;font-size:15.5px;color:#1b1b1b;font-weight:400;letter-spacing:0.5px;'>Nov 23, 2009 10:51 AM</div><div class='a' style='left:971px;top:247px;width:6px;height:2px;background:#3a3a3a'></div><div class='a' style='left:980px;top:247px;width:6px;height:2px;background:#3a3a3a'></div><div class='t' style='left:1021.5px;top:238.38px;font-size:15.5px;color:#1b1b1b;font-weight:400;letter-spacing:0.24px;'>Folder</div><svg style='left:321px;top:260.55px' width='17' height='19' viewBox='0 0 17 19'><path d='M1.5,1 L11,1 L15.5,5.5 L15.5,18 L1.5,18 Z' fill='#fbfbfb' stroke='#a6a6a6' stroke-width='1'/><path d='M11,1 L11,5.5 L15.5,5.5' fill='#eee' stroke='#a6a6a6' stroke-width='1'/><path d='M4,6 Q6,4 9,5 Q12,5 12.5,8 Q13,11 11,13 Q8,14.5 5.5,13 Q3,11 4,6 Z' fill='#9a2f95'/><ellipse cx='8' cy='8.5' rx='2.6' ry='2' fill='#d98ad6'/><rect x='4' y='15' width='8' height='1.6' fill='#8a9a8a'/><rect x='4.5' y='2.5' width='6' height='1' fill='#b0b0b0'/></svg><div class='t' style='left:347.3px;top:261.93px;font-size:15.5px;color:#1b1b1b;font-weight:400;letter-spacing:0.5px;'>_config.yml</div><div class='t' style='left:676.6px;top:261.93px;font-size:15.5px;color:#1b1b1b;font-weight:400;letter-spacing:0.5px;'>Oct 25, 2009 7:19 PM</div><div class='t' style='right:293px;top:261.93px;font-size:15.5px;color:#1b1b1b;font-weight:400;letter-spacing:0.2px'>4 KB</div><div class='t' style='left:1021.5px;top:261.93px;font-size:15.5px;color:#1b1b1b;font-weight:400;letter-spacing:0.24px;'>YAML …ument</div><svg style='left:321px;top:284.1px' width='17' height='19' viewBox='0 0 17 19'><path d='M1.5,1 L11,1 L15.5,5.5 L15.5,18 L1.5,18 Z' fill='#fbfbfb' stroke='#d0d0d0' stroke-width='1'/><path d='M11,1 L11,5.5 L15.5,5.5' fill='#eee' stroke='#d0d0d0' stroke-width='1'/></svg><div class='t' style='left:347.3px;top:285.48px;font-size:15.5px;color:#9c9c9c;font-weight:400;letter-spacing:0.5px;'>.gitignore</div><div class='t' style='left:676.6px;top:285.48px;font-size:15.5px;color:#1b1b1b;font-weight:400;letter-spacing:0.5px;'>Aug 20, 2009 5:02 PM</div><div class='t' style='right:293px;top:285.48px;font-size:15.5px;color:#1b1b1b;font-weight:400;letter-spacing:0.2px'>4 KB</div><div class='t' style='left:1021.5px;top:285.48px;font-size:15.5px;color:#1b1b1b;font-weight:400;letter-spacing:0.24px;'>Document</div><svg style='left:321px;top:307.65px' width='17' height='19' viewBox='0 0 17 19'><path d='M1.5,1 L11,1 L15.5,5.5 L15.5,18 L1.5,18 Z' fill='#fbfbfb' stroke='#d0d0d0' stroke-width='1'/><path d='M11,1 L11,5.5 L15.5,5.5' fill='#eee' stroke='#d0d0d0' stroke-width='1'/></svg><div class='t' style='left:347.3px;top:309.03px;font-size:15.5px;color:#9c9c9c;font-weight:400;letter-spacing:0.5px;'>.gitmodules</div><div class='t' style='left:676.6px;top:309.03px;font-size:15.5px;color:#1b1b1b;font-weight:400;letter-spacing:0.5px;'>Aug 20, 2009 5:02 PM</div><div class='t' style='right:293px;top:309.03px;font-size:15.5px;color:#1b1b1b;font-weight:400;letter-spacing:0.2px'>4 KB</div><div class='t' style='left:1021.5px;top:309.03px;font-size:15.5px;color:#1b1b1b;font-weight:400;letter-spacing:0.24px;'>Document</div><svg style='left:321px;top:331.20000000000005px' width='17' height='19' viewBox='0 0 17 19'><path d='M1.5,1 L11,1 L15.5,5.5 L15.5,18 L1.5,18 Z' fill='#fbfbfb' stroke='#a6a6a6' stroke-width='1'/><path d='M11,1 L11,5.5 L15.5,5.5' fill='#eee' stroke='#a6a6a6' stroke-width='1'/><circle cx='8.0' cy='9.5' r='4' fill='#5aa1e0'/><path d='M5.5,8.5 Q8.5,5.5 11.5,7.5' stroke='#fff' stroke-width='1.2' fill='none'/></svg><div class='t' style='left:347.3px;top:332.58px;font-size:15.5px;color:#1b1b1b;font-weight:400;letter-spacing:0.5px;'>about.html</div><div class='t' style='left:676.6px;top:332.58px;font-size:15.5px;color:#1b1b1b;font-weight:400;letter-spacing:0.5px;'>Jan 3, 2010 1:08 AM</div><div class='t' style='right:293px;top:332.58px;font-size:15.5px;color:#1b1b1b;font-weight:400;letter-spacing:0.2px'>8 KB</div><div class='t' style='left:1021.5px;top:332.58px;font-size:15.5px;color:#1b1b1b;font-weight:400;letter-spacing:0.24px;'>HTML …ument</div><svg style='left:321px;top:354.75px' width='17' height='19' viewBox='0 0 17 19'><path d='M1.5,1 L11,1 L15.5,5.5 L15.5,18 L1.5,18 Z' fill='#fbfbfb' stroke='#a6a6a6' stroke-width='1'/><path d='M11,1 L11,5.5 L15.5,5.5' fill='#eee' stroke='#a6a6a6' stroke-width='1'/></svg><div class='t' style='left:347.3px;top:356.13px;font-size:15.5px;color:#1b1b1b;font-weight:400;letter-spacing:0.5px;'>CNAME</div><div class='t' style='left:676.6px;top:356.13px;font-size:15.5px;color:#1b1b1b;font-weight:400;letter-spacing:0.5px;'>Aug 20, 2009 5:03 PM</div><div class='t' style='right:293px;top:356.13px;font-size:15.5px;color:#1b1b1b;font-weight:400;letter-spacing:0.2px'>4 KB</div><div class='t' style='left:1021.5px;top:356.13px;font-size:15.5px;color:#1b1b1b;font-weight:400;letter-spacing:0.24px;'>Document</div><svg style='left:321px;top:378.3px' width='17' height='19' viewBox='0 0 17 19'><rect x='0.5' y='1.5' width='16' height='16' rx='1' fill='#f2f2f2' stroke='#8a8a8a'/><rect x='3' y='6' width='3' height='6' fill='#333'/><rect x='6' y='8' width='6' height='4' fill='#3d8ed8'/><rect x='2.5' y='13' width='11' height='1' fill='#999'/></svg><div class='t' style='left:347.3px;top:379.68px;font-size:15.5px;color:#1b1b1b;font-weight:400;letter-spacing:0.5px;'>favicon.ico</div><div class='t' style='left:676.6px;top:379.68px;font-size:15.5px;color:#1b1b1b;font-weight:400;letter-spacing:0.5px;'>Aug 20, 2009 5:03 PM</div><div class='t' style='right:293px;top:379.68px;font-size:15.5px;color:#1b1b1b;font-weight:400;letter-spacing:0.2px'>4 KB</div><div class='t' style='left:1021.5px;top:379.68px;font-size:15.5px;color:#1b1b1b;font-weight:400;letter-spacing:0.24px;'>Windo…image</div><svg style='left:321px;top:401.85px' width='17' height='19' viewBox='0 0 17 19'><path d='M1.5,1 L11,1 L15.5,5.5 L15.5,18 L1.5,18 Z' fill='#fbfbfb' stroke='#a6a6a6' stroke-width='1'/><path d='M11,1 L11,5.5 L15.5,5.5' fill='#eee' stroke='#a6a6a6' stroke-width='1'/><circle cx='8.0' cy='9.5' r='4' fill='#5aa1e0'/><path d='M5.5,8.5 Q8.5,5.5 11.5,7.5' stroke='#fff' stroke-width='1.2' fill='none'/></svg><div class='t' style='left:347.3px;top:403.23px;font-size:15.5px;color:#1b1b1b;font-weight:400;letter-spacing:0.5px;'>index.html</div><div class='t' style='left:676.6px;top:403.23px;font-size:15.5px;color:#1b1b1b;font-weight:400;letter-spacing:0.5px;'>Nov 7, 2009 3:29 PM</div><div class='t' style='right:293px;top:403.23px;font-size:15.5px;color:#1b1b1b;font-weight:400;letter-spacing:0.2px'>16 KB</div><div class='t' style='left:1021.5px;top:403.23px;font-size:15.5px;color:#1b1b1b;font-weight:400;letter-spacing:0.24px;'>HTML …ument</div><svg style='left:321px;top:425.40000000000003px' width='17' height='19' viewBox='0 0 17 19'><path d='M1.5,1 L11,1 L15.5,5.5 L15.5,18 L1.5,18 Z' fill='#fbfbfb' stroke='#a6a6a6' stroke-width='1'/><path d='M11,1 L11,5.5 L15.5,5.5' fill='#eee' stroke='#a6a6a6' stroke-width='1'/><rect x='4' y='6.0' width='9' height='0.9' fill='#8a8a8a'/><rect x='4' y='8.2' width='8' height='0.9' fill='#8a8a8a'/><rect x='4' y='10.4' width='9' height='0.9' fill='#8a8a8a'/><rect x='4' y='12.6' width='8' height='0.9' fill='#8a8a8a'/><rect x='4' y='14.8' width='9' height='0.9' fill='#8a8a8a'/></svg><div class='t' style='left:347.3px;top:426.78px;font-size:15.5px;color:#1b1b1b;font-weight:400;letter-spacing:0.5px;'>robots.txt</div><div class='t' style='left:676.6px;top:426.78px;font-size:15.5px;color:#1b1b1b;font-weight:400;letter-spacing:0.5px;'>Oct 25, 2009 8:43 PM</div><div class='t' style='right:293px;top:426.78px;font-size:15.5px;color:#1b1b1b;font-weight:400;letter-spacing:0.2px'>4 KB</div><div class='t' style='left:1021.5px;top:426.78px;font-size:15.5px;color:#1b1b1b;font-weight:400;letter-spacing:0.24px;'>Plain Text</div><div class='a' style='left:1230px;top:120px;width:1px;height:629px;background:#9a9a9a'></div><div class='a' style='left:288px;top:720px;width:943px;height:29px;background:#dde3ea;border-top:1px solid #a9a9a9'></div><svg style='left:303px;top:725px' width='18' height='18' viewBox='0 0 18 18'><defs><linearGradient id='hd31025' x1='0' y1='0' x2='0' y2='1'><stop offset='0' stop-color='#ececec'/><stop offset='.6' stop-color='#c9c9c9'/><stop offset='1' stop-color='#b4b4b4'/></linearGradient></defs><rect x='0.8' y='0.8' width='16.4' height='16.4' rx='1.2' fill='url(#hd31025)' stroke='#a2a2a2' stroke-width='0.9'/><rect x='3' y='3' width='12' height='1.4' fill='#3c3c3c'/><rect x='2.5' y='5' width='13' height='0.8' fill='#f6f6f6'/><ellipse cx='9.0' cy='9.5' rx='4.5' ry='2.6' fill='none' stroke='#dadada' stroke-width='0.8'/><rect x='1.5' y='13' width='15' height='2.6' fill='#8a8a8a'/><rect x='7' y='13' width='6' height='2.6' fill='#2a2a2a'/><rect x='13' y='12.8' width='3' height='2.8' fill='#c8e04a'/></svg><div class='t' style='left:328px;top:726.95px;font-size:14px;color:#1b1b1b;font-weight:400;letter-spacing:0.3px;'>Macho</div><svg style='left:376.5px;top:730px' width='7' height='9' viewBox='0 0 7 9'><path d='M0.5,0.5 L6.5,4.5 L0.5,8.5 Z' fill='#a9b0b8'/></svg><svg style='left:390.5px;top:726px' width='20' height='17' viewBox='0 0 20 17'><defs><linearGradient id='f3905_7260' x1='0' y1='0' x2='0' y2='1'><stop offset='0' stop-color='#a9cdea'/><stop offset='1' stop-color='#6fa3d2'/></linearGradient></defs><path d='M0.6,15.4 L0.6,2.2 Q0.6,0.6 2.2,0.6 L6.8,0.6 Q8,0.6 8.6,2.2 L8.9,2.8 L17.8,2.8 Q19.4,2.8 19.4,4.4 L19.4,15.4 Q19.4,16.4 18,16.4 L2,16.4 Q0.6,16.4 0.6,15.4 Z' fill='url(#f3905_7260)' stroke='#6489ac' stroke-width='1'/><path d='M1.2,4.2 L18.8,4.2' stroke='rgba(255,255,255,.45)' stroke-width='1'/></svg><svg style='left:395px;top:729px' width='11' height='11' viewBox='0 0 11 11'><circle cx='5.5' cy='4' r='2.4' fill='#4f86be'/><path d='M1,10.5 Q5.5,5 10,10.5 Z' fill='#4f86be'/></svg><div class='t' style='left:415px;top:726.95px;font-size:14px;color:#1b1b1b;font-weight:400;letter-spacing:0.3px;'>Users</div><svg style='left:456.5px;top:730px' width='7' height='9' viewBox='0 0 7 9'><path d='M0.5,0.5 L6.5,4.5 L0.5,8.5 Z' fill='#a9b0b8'/></svg><svg style='left:473px;top:723px' width='19' height='19' viewBox='0 0 19 19'><path d='M1,9.5 L9.5,1.5 L18,9.5' fill='none' stroke='#3a3a3a' stroke-width='1.8'/><path d='M3.5,8.5 L9.5,3 L15.5,8.5 L15.5,18 L3.5,18 Z' fill='#f4efe6' stroke='#6a5a4a' stroke-width='.8'/><rect x='8' y='11.5' width='3.5' height='6.5' fill='#c8401a'/><rect x='14' y='2' width='2' height='4' fill='#6a4a3a'/></svg><div class='t' style='left:497px;top:726.95px;font-size:14px;color:#1b1b1b;font-weight:400;letter-spacing:0.3px;'>darwin</div><svg style='left:547.5px;top:730px' width='7' height='9' viewBox='0 0 7 9'><path d='M0.5,0.5 L6.5,4.5 L0.5,8.5 Z' fill='#a9b0b8'/></svg><svg style='left:562px;top:726px' width='20' height='17' viewBox='0 0 20 17'><defs><linearGradient id='f5620_7260' x1='0' y1='0' x2='0' y2='1'><stop offset='0' stop-color='#b6d3e9'/><stop offset='1' stop-color='#7ea7c9'/></linearGradient></defs><path d='M0.6,15.4 L0.6,2.2 Q0.6,0.6 2.2,0.6 L6.8,0.6 Q8,0.6 8.6,2.2 L8.9,2.8 L17.8,2.8 Q19.4,2.8 19.4,4.4 L19.4,15.4 Q19.4,16.4 18,16.4 L2,16.4 Q0.6,16.4 0.6,15.4 Z' fill='url(#f5620_7260)' stroke='#6489ac' stroke-width='1'/><path d='M1.2,4.2 L18.8,4.2' stroke='rgba(255,255,255,.45)' stroke-width='1'/></svg><div class='t' style='left:587px;top:726.95px;font-size:14px;color:#1b1b1b;font-weight:400;letter-spacing:0.3px;'>code</div><svg style='left:625.5px;top:730px' width='7' height='9' viewBox='0 0 7 9'><path d='M0.5,0.5 L6.5,4.5 L0.5,8.5 Z' fill='#a9b0b8'/></svg><svg style='left:638.5px;top:726px' width='20' height='17' viewBox='0 0 20 17'><defs><linearGradient id='f6385_7260' x1='0' y1='0' x2='0' y2='1'><stop offset='0' stop-color='#b6d3e9'/><stop offset='1' stop-color='#7ea7c9'/></linearGradient></defs><path d='M0.6,15.4 L0.6,2.2 Q0.6,0.6 2.2,0.6 L6.8,0.6 Q8,0.6 8.6,2.2 L8.9,2.8 L17.8,2.8 Q19.4,2.8 19.4,4.4 L19.4,15.4 Q19.4,16.4 18,16.4 L2,16.4 Q0.6,16.4 0.6,15.4 Z' fill='url(#f6385_7260)' stroke='#6489ac' stroke-width='1'/><path d='M1.2,4.2 L18.8,4.2' stroke='rgba(255,255,255,.45)' stroke-width='1'/></svg><div class='t' style='left:664px;top:726.95px;font-size:14px;color:#1b1b1b;font-weight:400;letter-spacing:0.3px;'>binaryage</div><div class='a' style='left:47px;top:749px;width:1185px;height:31px;border-radius:0 0 4px 4px;background:linear-gradient(#d2d2d2,#c2c2c2 50%,#a9a9a9);border-top:1px solid #6e6e6e;border-bottom:1px solid #7d7d7d'></div><div class='t' style='left:339px;width:600px;text-align:center;top:756.55px;font-size:14px;color:#2a2a2a;font-weight:400;letter-spacing:0.4px'>204.86 GB available</div><svg style='left:1214px;top:762px' width='16' height='16' viewBox='0 0 16 16'><path d='M14.5,3 L3,14.5 M14.5,7.5 L7.5,14.5 M14.5,11.5 L11.5,14.5' stroke='#6c6c6c' stroke-width='1'/><path d='M15,4 L4,15 M15,8.5 L8.5,15' stroke='#e0e0e0' stroke-width='1'/></svg><div class='a' style='left:47px;top:74px;width:1px;height:45px;background:#c8c8c8'></div><div class='a' style='left:47px;top:120px;width:1px;height:629px;background:#c5cad0'></div><div class='a' style='left:1231px;top:74px;width:1px;height:675px;background:#c4c4c4'></div></div></body></html>
